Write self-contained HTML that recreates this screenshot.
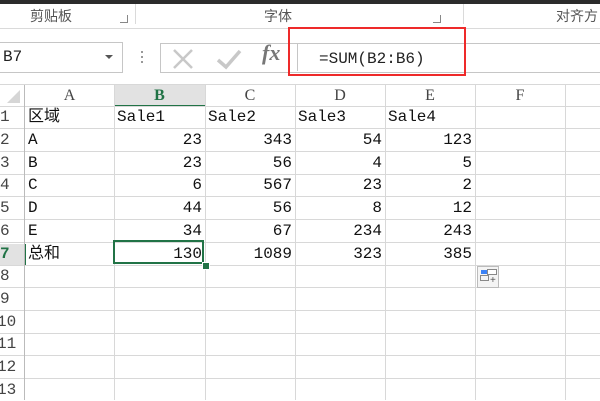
<!DOCTYPE html>
<html><head><style>
body{margin:0;width:600px;height:400px;overflow:hidden;background:#fff;position:relative;font-family:"Liberation Mono","Noto Sans CJK SC",monospace;}
.a{position:absolute;}
.t{position:absolute;font-size:16px;color:#111;white-space:nowrap;line-height:22px;}
.r{text-align:right;}
.hl{position:absolute;left:0;width:600px;height:1px;background:#d8d8d8;}
.vl{position:absolute;top:85px;height:315px;width:1px;background:#d8d8d8;}
.rh{position:absolute;left:0;width:24px;font-size:16px;color:#444;line-height:22px;}
.ch{position:absolute;top:86px;font-size:16px;color:#444;text-align:center;line-height:20px;font-family:"Liberation Serif",serif;}
</style></head><body>
<div class="a" style="left:0;top:0;width:600px;height:4px;background:#2b2b2b"></div>
<div class="a" style="left:0;top:4px;width:600px;height:25px;background:#fff"></div>
<div class="a" style="left:0;top:28px;width:600px;height:1px;background:#dadada"></div>
<div class="a" style="left:135px;top:4px;width:1px;height:20px;background:#dadada"></div>
<div class="a" style="left:463px;top:4px;width:1px;height:20px;background:#dadada"></div>
<div class="a" style="left:30px;top:6px;font:14px 'Noto Sans CJK SC',sans-serif;color:#555">剪贴板</div>
<div class="a" style="left:264px;top:6px;font:14px 'Noto Sans CJK SC',sans-serif;color:#555">字体</div>
<div class="a" style="left:556px;top:6px;font:14px 'Noto Sans CJK SC',sans-serif;color:#555">对齐方</div>
<div class="a" style="left:120px;top:15px;width:7px;height:7px;border-right:1px solid #888;border-bottom:1px solid #888"></div>
<div class="a" style="left:433px;top:15px;width:7px;height:7px;border-right:1px solid #888;border-bottom:1px solid #888"></div>
<!-- name box -->
<div class="a" style="left:-1px;top:42px;width:122px;height:29px;border:1px solid #c6c6c6"></div>
<div class="t" style="left:3px;top:46px;color:#222">B7</div>
<div class="a" style="left:105px;top:55px;border-left:4px solid transparent;border-right:4px solid transparent;border-top:4px solid #555"></div>
<div class="a" style="left:141px;top:51px;width:2px;height:2px;background:#999;box-shadow:0 5px #999,0 10px #999"></div>
<div class="a" style="left:160px;top:43px;width:440px;height:28px;border:1px solid #c6c6c6;border-right:none"></div>
<svg class="a" style="left:170px;top:46px" width="130" height="26"><path d="M4 4L22 22M22 4L4 22" stroke="#c8c8c8" stroke-width="2.5" fill="none"/><path d="M48 14L56 21L70 5" stroke="#c8c8c8" stroke-width="3.5" fill="none"/></svg>
<div class="a" style="left:262px;top:40px;font:italic bold 22px 'Liberation Serif',serif;color:#777">fx</div>
<div class="a" style="left:288px;top:27px;width:174px;height:45px;border:2.5px solid #ee2a2a"></div>
<div class="a" style="left:297px;top:44px;width:1px;height:27px;background:#c6c6c6"></div>
<div class="t" style="left:319px;top:48px;color:#222">=SUM(B2:B6)</div>
<!-- header -->
<div class="a" style="left:114px;top:85px;width:91px;height:20px;background:#e2e2e2;border-bottom:2px solid #217346"></div>
<div class="a" style="left:0;top:244px;width:24px;height:22px;background:#e2e2e2;border-right:2px solid #217346"></div>
<svg class="a" style="left:4px;top:88px" width="18" height="16"><path d="M16 2L16 15L3 15Z" fill="#d6d6d6"/></svg>
<div class="hl" style="top:84px"></div>
<div class="hl" style="top:106px"></div>
<div class="hl" style="top:128px"></div>
<div class="hl" style="top:151px"></div>
<div class="hl" style="top:174px"></div>
<div class="hl" style="top:196px"></div>
<div class="hl" style="top:219px"></div>
<div class="hl" style="top:242px"></div>
<div class="hl" style="top:265px"></div>
<div class="hl" style="top:287px"></div>
<div class="hl" style="top:310px"></div>
<div class="hl" style="top:333px"></div>
<div class="hl" style="top:355px"></div>
<div class="hl" style="top:378px"></div>
<div class="vl" style="left:24px;background:#bbb"></div>
<div class="vl" style="left:114px"></div>
<div class="vl" style="left:205px"></div>
<div class="vl" style="left:295px"></div>
<div class="vl" style="left:385px"></div>
<div class="vl" style="left:475px"></div>
<div class="vl" style="left:565px"></div>
<div class="ch" style="left:25px;width:89px">A</div>
<div class="ch" style="left:114px;width:91px;color:#217346;font-weight:bold">B</div>
<div class="ch" style="left:205px;width:90px">C</div>
<div class="ch" style="left:295px;width:90px">D</div>
<div class="ch" style="left:385px;width:90px">E</div>
<div class="ch" style="left:475px;width:90px">F</div>
<div class="rh" style="top:106px">1</div><div class="rh" style="top:129px">2</div><div class="rh" style="top:152px">3</div><div class="rh" style="top:174px">4</div><div class="rh" style="top:197px">5</div><div class="rh" style="top:220px">6</div>
<div class="rh" style="top:243px;color:#217346;font-weight:bold">7</div>
<div class="rh" style="top:265px">8</div><div class="rh" style="top:288px">9</div><div class="rh" style="top:311px;left:-3px">10</div><div class="rh" style="top:333px;left:-3px">11</div><div class="rh" style="top:356px;left:-3px">12</div><div class="rh" style="top:379px;left:-3px">13</div>
<!-- data -->
<div class="t" style="left:28px;top:106px">区域</div>
<div class="t" style="left:117px;top:106px">Sale1</div>
<div class="t" style="left:208px;top:106px">Sale2</div>
<div class="t" style="left:298px;top:106px">Sale3</div>
<div class="t" style="left:388px;top:106px">Sale4</div>
<div class="t" style="left:28px;top:129px">A</div>
<div class="t" style="left:28px;top:152px">B</div>
<div class="t" style="left:28px;top:174px">C</div>
<div class="t" style="left:28px;top:197px">D</div>
<div class="t" style="left:28px;top:220px">E</div>
<div class="t" style="left:28px;top:243px">总和</div>
<div class="t r" style="left:114px;width:88px;top:129px">23</div>
<div class="t r" style="left:205px;width:87px;top:129px">343</div>
<div class="t r" style="left:295px;width:87px;top:129px">54</div>
<div class="t r" style="left:385px;width:87px;top:129px">123</div>
<div class="t r" style="left:114px;width:88px;top:152px">23</div>
<div class="t r" style="left:205px;width:87px;top:152px">56</div>
<div class="t r" style="left:295px;width:87px;top:152px">4</div>
<div class="t r" style="left:385px;width:87px;top:152px">5</div>
<div class="t r" style="left:114px;width:88px;top:174px">6</div>
<div class="t r" style="left:205px;width:87px;top:174px">567</div>
<div class="t r" style="left:295px;width:87px;top:174px">23</div>
<div class="t r" style="left:385px;width:87px;top:174px">2</div>
<div class="t r" style="left:114px;width:88px;top:197px">44</div>
<div class="t r" style="left:205px;width:87px;top:197px">56</div>
<div class="t r" style="left:295px;width:87px;top:197px">8</div>
<div class="t r" style="left:385px;width:87px;top:197px">12</div>
<div class="t r" style="left:114px;width:88px;top:220px">34</div>
<div class="t r" style="left:205px;width:87px;top:220px">67</div>
<div class="t r" style="left:295px;width:87px;top:220px">234</div>
<div class="t r" style="left:385px;width:87px;top:220px">243</div>
<div class="t r" style="left:114px;width:88px;top:243px">130</div>
<div class="t r" style="left:205px;width:87px;top:243px">1089</div>
<div class="t r" style="left:295px;width:87px;top:243px">323</div>
<div class="t r" style="left:385px;width:87px;top:243px">385</div>
<div class="a" style="left:113px;top:240px;width:91px;height:24px;border:2px solid #217346;box-sizing:border-box"></div>
<div class="a" style="left:202px;top:262px;width:6px;height:6px;background:#217346;border:1px solid #fff"></div>
<!-- paste options -->
<div class="a" style="left:477px;top:266px;width:22px;height:22px;border:1px solid #bbb;background:#f4f4f4;box-sizing:border-box"></div>
<div class="a" style="left:481px;top:270px;width:6px;height:4px;background:#3b82f6"></div>
<div class="a" style="left:487px;top:269px;width:8px;height:4px;border:1px solid #888;background:#fff"></div>
<div class="a" style="left:480px;top:275px;width:7px;height:4px;border:1px solid #888"></div>
<div class="a" style="left:490px;top:276px;font:10px sans-serif;color:#555;line-height:10px">+</div>
</body></html>
